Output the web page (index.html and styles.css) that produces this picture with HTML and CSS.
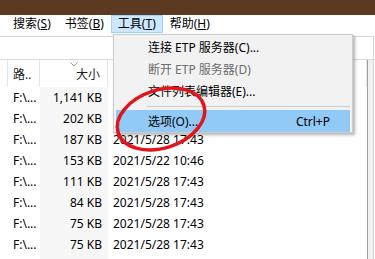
FILE: index.html
```html
<!DOCTYPE html>
<html lang="zh-CN">
<head>
  <meta charset="UTF-8" />
  <meta name="viewport" content="width=device-width, initial-scale=1.0" />
  <title>Everything - 工具菜单</title>
  <link rel="stylesheet" href="styles.css">
</head>
<body>
  <div class="window">
    <div class="titlebar"></div>

    <!-- Menu bar -->
    <nav class="menubar">
      <span class="menu-item">搜索(<u>S</u>)</span>
      <span class="menu-item">书签(<u>B</u>)</span>
      <span class="menu-item open">工具(<u>T</u>)</span>
      <span class="menu-item">帮助(<u>H</u>)</span>
    </nav>

    <!-- Search box -->
    <div class="toolbar">
      <div class="searchbox"></div>
    </div>

    <!-- Results list (dates of the first rows sit under the open menu) -->
    <div class="results">
      <div class="table">
        <div class="row head">
          <div class="cell c0"></div>
          <div class="cell c1">路..</div>
          <div class="cell c2">
            <svg class="sort" width="8" height="5" viewBox="0 0 8 5"><polyline points="0.5,0.5 4,4 7.5,0.5" fill="none" stroke="#a6a6a6" stroke-width="1"/></svg>
            大小
          </div>
          <div class="cell c3"></div>
        </div>
        <div class="row"><div class="cell c0"></div><div class="cell c1">F:\...</div><div class="cell c2">1,141 KB</div><div class="cell c3"></div></div>
        <div class="row"><div class="cell c0"></div><div class="cell c1">F:\...</div><div class="cell c2">202 KB</div><div class="cell c3"></div></div>
        <div class="row"><div class="cell c0"></div><div class="cell c1">F:\...</div><div class="cell c2">187 KB</div><div class="cell c3">2021/5/28 17:43</div></div>
        <div class="row"><div class="cell c0"></div><div class="cell c1">F:\...</div><div class="cell c2">153 KB</div><div class="cell c3">2021/5/22 10:46</div></div>
        <div class="row"><div class="cell c0"></div><div class="cell c1">F:\...</div><div class="cell c2">111 KB</div><div class="cell c3">2021/5/28 17:43</div></div>
        <div class="row"><div class="cell c0"></div><div class="cell c1">F:\...</div><div class="cell c2">84 KB</div><div class="cell c3">2021/5/28 17:43</div></div>
        <div class="row"><div class="cell c0"></div><div class="cell c1">F:\...</div><div class="cell c2">75 KB</div><div class="cell c3">2021/5/28 17:43</div></div>
        <div class="row"><div class="cell c0"></div><div class="cell c1">F:\...</div><div class="cell c2">75 KB</div><div class="cell c3">2021/5/28 17:43</div></div>
        <div class="row"><div class="cell c0"></div><div class="cell c1"></div><div class="cell c2"></div><div class="cell c3"></div></div>
      </div>
      <div class="vscroll"></div>
    </div>

    <!-- Tools drop-down -->
    <div class="dropdown">
      <div class="dd-item">连接 ETP 服务器(C)...</div>
      <div class="dd-item disabled">断开 ETP 服务器(D)</div>
      <div class="dd-item">文件列表编辑器(E)...</div>
      <div class="dd-sep"></div>
      <div class="dd-item active">选项(O)...<span class="shortcut">Ctrl+P</span></div>
    </div>

    <!-- Red hand-drawn circle around "选项" -->
    <svg class="mark" width="375" height="259" viewBox="0 0 375 259">
      <ellipse cx="161" cy="119" rx="45" ry="29" transform="rotate(-18 161 119)" fill="none" stroke="#e0161c" stroke-width="3.5"/>
    </svg>
  </div>
</body>
</html>
```

FILE: styles.css
```css
body {
  margin: 0;
  background: #fff;
  font-family: "Noto Sans", "Noto Sans CJK SC", sans-serif;
  font-size: 12px;
  color: #000;
}

.window {
  position: relative;
  width: 375px;
  height: 259px;
  overflow: hidden;
}

.titlebar {
  height: 15px;
  background: #5b3a21;
}

/* Menu bar */
.menubar {
  display: flex;
  height: 20px;
  padding-left: 6px;
}

.menu-item {
  height: 16px;
  line-height: 16px;
  padding: 0 6px;
  border: 1px solid transparent;
  white-space: nowrap;
}

.menu-item.open {
  background: #cce8ff;
  border-color: #99d1ff;
}

/* Search box */
.toolbar {
  height: 24px;
  padding-top: 1px;
  box-sizing: border-box;
}

.searchbox {
  height: 22px;
  margin-right: 1px;
  border: 1px solid #d4d4d4;
  border-left: none;
  border-bottom: none;
  box-sizing: border-box;
}

/* Results */
.results {
  display: flex;
  height: 200px;
  border-top: 1px solid #d9d9d9;
  padding-right: 1px;
}

.table {
  flex: 1;
}

.vscroll {
  width: 5px;
  background: #f0f0f0;
  border-left: 1px solid #a0a0a0;
  border-right: 1px solid #d6d6d6;
}

.row {
  display: grid;
  grid-template-columns: 8px 32px 68px 1fr;
  height: 21px;
  align-items: center;
}

.row.head {
  height: 27px;
}

.cell {
  height: 100%;
  display: flex;
  align-items: center;
  white-space: nowrap;
  overflow: hidden;
  box-sizing: border-box;
}

.head .cell {
  border-right: 1px solid #e5e5e5;
  color: #1a1a1a;
}

.c1 {
  padding-left: 5px;
}

.c2 {
  justify-content: flex-end;
  padding-right: 6px;
  background: #f7f7f7;
}

.head .c2 {
  position: relative;
  background: #fff;
  padding-right: 7px;
}

.sort {
  position: absolute;
  left: 30px;
  top: 2px;
}

.c3 {
  padding-left: 5px;
}

/* Drop-down menu */
.dropdown {
  position: absolute;
  left: 113px;
  top: 34px;
  width: 240px;
  padding: 1px 2px 0;
  background: #f2f2f2;
  border: 1px solid #cccccc;
  box-sizing: border-box;
  box-shadow: 2px 2px 3px rgba(0, 0, 0, 0.3);
}

.dd-item {
  display: flex;
  align-items: center;
  height: 22px;
  padding-left: 32px;
  padding-right: 20px;
  white-space: nowrap;
}

.dd-item.disabled {
  color: #6d6d6d;
}

.dd-item.active {
  background: #91c9f7;
}

.shortcut {
  margin-left: auto;
}

.dd-sep {
  margin: 4px 0 3px 31px;
  border-top: 1px solid #cccccc;
}

.mark {
  position: absolute;
  left: 0;
  top: 0;
  pointer-events: none;
}
```
